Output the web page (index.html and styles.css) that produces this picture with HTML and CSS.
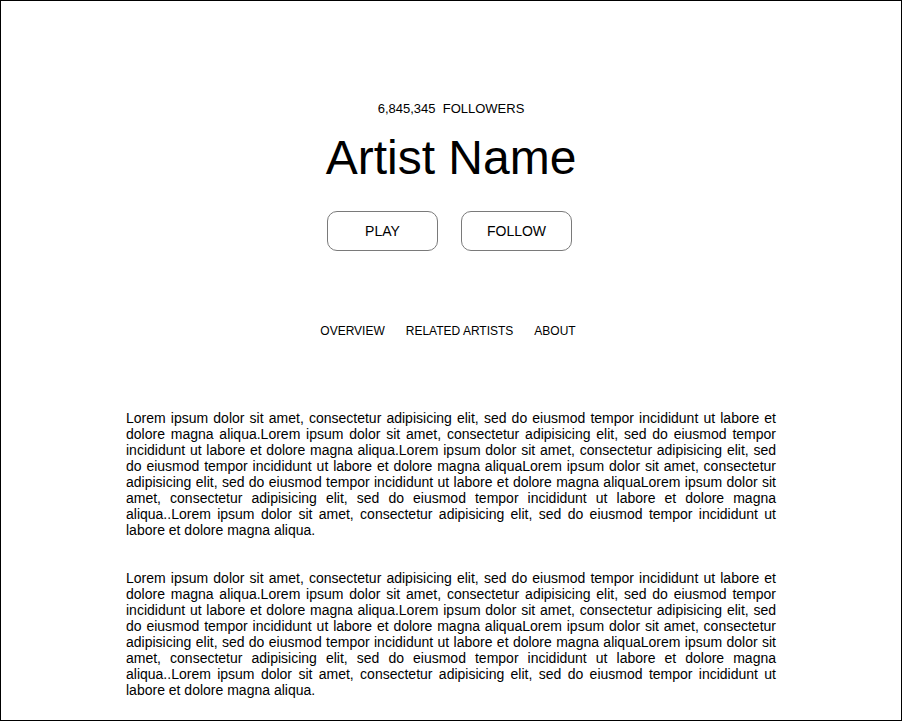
FILE: index.html
```
<!DOCTYPE html>
<html>
<head>
<meta charset="utf-8">
<link rel="stylesheet" href="styles.css">
</head>
<body>
<div class="page">
  <header class="hero">
    <div class="followers">6,845,345&nbsp; FOLLOWERS</div>
    <h1 class="artist">Artist Name</h1>
    <div class="actions">
      <button class="btn">PLAY</button>
      <button class="btn">FOLLOW</button>
    </div>
  </header>
  <nav class="tabs">
    <a class="tab">OVERVIEW</a>
    <a class="tab">RELATED ARTISTS</a>
    <a class="tab">ABOUT</a>
  </nav>
  <main class="content">
    <p class="para">Lorem ipsum dolor sit amet, consectetur adipisicing elit, sed do eiusmod tempor incididunt ut labore et dolore magna aliqua.Lorem ipsum dolor sit amet, consectetur adipisicing elit, sed do eiusmod tempor incididunt ut labore et dolore magna aliqua.Lorem ipsum dolor sit amet, consectetur adipisicing elit, sed do eiusmod tempor incididunt ut labore et dolore magna aliquaLorem ipsum dolor sit amet, consectetur adipisicing elit, sed do eiusmod tempor incididunt ut labore et dolore magna aliquaLorem ipsum dolor sit amet, consectetur adipisicing elit, sed do eiusmod tempor incididunt ut labore et dolore magna aliqua..Lorem ipsum dolor sit amet, consectetur adipisicing elit, sed do eiusmod tempor incididunt ut labore et dolore magna aliqua.</p>
    <p class="para">Lorem ipsum dolor sit amet, consectetur adipisicing elit, sed do eiusmod tempor incididunt ut labore et dolore magna aliqua.Lorem ipsum dolor sit amet, consectetur adipisicing elit, sed do eiusmod tempor incididunt ut labore et dolore magna aliqua.Lorem ipsum dolor sit amet, consectetur adipisicing elit, sed do eiusmod tempor incididunt ut labore et dolore magna aliquaLorem ipsum dolor sit amet, consectetur adipisicing elit, sed do eiusmod tempor incididunt ut labore et dolore magna aliquaLorem ipsum dolor sit amet, consectetur adipisicing elit, sed do eiusmod tempor incididunt ut labore et dolore magna aliqua..Lorem ipsum dolor sit amet, consectetur adipisicing elit, sed do eiusmod tempor incididunt ut labore et dolore magna aliqua.</p>
  </main>
</div>
</body>
</html>
```
FILE: styles.css
```
* { box-sizing: border-box; }
html, body { margin: 0; padding: 0; background: #fff; }
body {
  font-family: "Liberation Sans", Arial, sans-serif;
  color: #000;
}
.page {
  width: 902px;
  height: 721px;
  border: 1px solid #000;
  overflow: hidden;
  padding-top: 100px;
  display: flex;
  flex-direction: column;
  align-items: center;
}
.hero {
  display: flex;
  flex-direction: column;
  align-items: center;
}
.followers {
  font-size: 13px;
  line-height: 15px;
}
.artist {
  margin: 18px 0 0;
  font-size: 48px;
  font-weight: normal;
  line-height: 48px;
}
.actions {
  margin-top: 29px;
  display: flex;
  gap: 23px;
  margin-right: 3px;
}
.btn {
  width: 111px;
  height: 40px;
  border: 1px solid #7a7a7a;
  border-radius: 10px;
  background: #fff;
  font-family: "Liberation Sans", Arial, sans-serif;
  font-size: 14px;
  color: #000;
  padding: 0;
}
.tabs {
  margin-top: 73px;
  display: flex;
  gap: 21px;
  margin-right: 6px;
}
.tab {
  font-size: 12px;
  line-height: 14px;
  color: #000;
}
.content {
  margin-top: 72px;
  width: 650px;
  display: flex;
  flex-direction: column;
  gap: 32px;
}
.para {
  margin: 0;
  font-size: 14px;
  line-height: 16px;
  text-align: justify;
}
```
